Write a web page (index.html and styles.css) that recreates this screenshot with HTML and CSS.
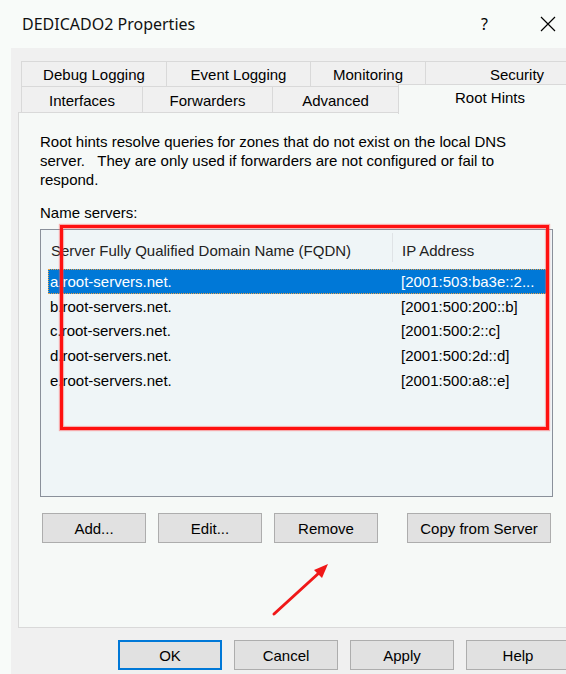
FILE: index.html
```html
<!DOCTYPE html>
<html lang="en">
<head>
<meta charset="utf-8">
<title>DEDICADO2 Properties</title>
<link rel="stylesheet" href="styles.css">
</head>
<body>
<div class="window">
  <div class="titlebar">
    <span class="title">DEDICADO2 Properties</span>
    <span class="help">?</span>
    <svg class="close" width="16" height="16" viewBox="0 0 16 16">
      <path d="M1 1 L15 15 M15 1 L1 15" stroke="#000" stroke-width="1.2" fill="none"/>
    </svg>
  </div>

  <div class="client">
    <div class="tabs">
      <div class="tab-row">
        <div class="tab w145">Debug Logging</div>
        <div class="tab w144">Event Logging</div>
        <div class="tab w115">Monitoring</div>
        <div class="tab w182">Security</div>
      </div>
      <div class="tab-row">
        <div class="tab w121">Interfaces</div>
        <div class="tab w130">Forwarders</div>
        <div class="tab w126">Advanced</div>
        <div class="tab w182 selected">Root Hints</div>
      </div>
    </div>

    <div class="panel">
      <p class="intro">Root hints resolve queries for zones that do not exist on the local DNS<br>server.&nbsp;&nbsp; They are only used if forwarders are not configured or fail to<br>respond.</p>
      <div class="label">Name servers:</div>

      <div class="listview">
        <div class="lv-header">
          <div class="col1">Server Fully Qualified Domain Name (FQDN)</div>
          <div class="col2">IP Address</div>
        </div>
        <div class="lv-row active">
          <div class="col1">a.root-servers.net.</div>
          <div class="col2">[2001:503:ba3e::2...</div>
        </div>
        <div class="lv-row">
          <div class="col1">b.root-servers.net.</div>
          <div class="col2">[2001:500:200::b]</div>
        </div>
        <div class="lv-row">
          <div class="col1">c.root-servers.net.</div>
          <div class="col2">[2001:500:2::c]</div>
        </div>
        <div class="lv-row">
          <div class="col1">d.root-servers.net.</div>
          <div class="col2">[2001:500:2d::d]</div>
        </div>
        <div class="lv-row">
          <div class="col1">e.root-servers.net.</div>
          <div class="col2">[2001:500:a8::e]</div>
        </div>
      </div>

      <div class="list-actions">
        <button class="btn">Add...</button>
        <button class="btn">Edit...</button>
        <button class="btn">Remove</button>
        <button class="btn wide">Copy from Server</button>
      </div>
    </div>

    <div class="dialog-actions">
      <button class="btn default">OK</button>
      <button class="btn">Cancel</button>
      <button class="btn">Apply</button>
      <button class="btn">Help</button>
    </div>
  </div>

  <!-- annotation drawn over the dialog -->
  <div class="highlight"></div>
  <svg class="pointer" width="566" height="674" viewBox="0 0 566 674">
    <line x1="274" y1="614" x2="320" y2="572" stroke="#f01818" stroke-width="3" stroke-linecap="round"/>
    <polygon points="328,564 314,570 322,578" fill="#f01818"/>
  </svg>
</div>
</body>
</html>
```

FILE: styles.css
```css
html, body {
  margin: 0;
  padding: 0;
  background: #f8fbf9;
}

.window {
  position: relative;
  width: 566px;
  height: 674px;
  overflow: hidden;
  background: #f8fbf9;
  font-family: "Liberation Sans", Arial, sans-serif;
  font-size: 15px;
  color: #000;
}

/* title bar */
.titlebar {
  height: 48px;
  display: flex;
  align-items: center;
  padding-left: 22px;
}

.title {
  font-family: "Noto Sans", "Open Sans", sans-serif;
  font-size: 16px;
  color: #111;
  flex: 1;
}

.help {
  font-family: "Noto Sans", sans-serif;
  font-size: 16px;
  margin-right: 52px;
}

.close {
  margin-right: 10px;
}

/* dialog body */
.client {
  margin-left: 11px;
  width: 600px;
  height: 626px;
  background: #f0f0f0;
  padding: 13px 0 0 7px;
  box-sizing: border-box;
}

.tabs {
  padding-left: 3px;
  position: relative;
  z-index: 2;
}

.tab-row {
  display: flex;
}

.tab-row:first-child .tab {
  height: 25px;
  padding-top: 0;
}

.tab {
  box-sizing: border-box;
  height: 26px;
  border: 1px solid #d9d9d9;
  border-bottom: none;
  margin-right: -1px;
  background: #f0f0f0;
  display: flex;
  align-items: center;
  justify-content: center;
  padding-top: 1px;
  white-space: nowrap;
}

.w145 { width: 146px; }
.w144 { width: 145px; }
.w115 { width: 116px; }
.w182 { width: 184px; }
.w121 { width: 122px; }
.w130 { width: 131px; }
.w126 { width: 127px; }

.tab.selected {
  background: #f6f9f7;
  height: 30px;
  margin-top: -2px;
  margin-bottom: -2px;
  padding-top: 0;
  padding-bottom: 4px;
}

.panel {
  box-sizing: border-box;
  width: 600px;
  height: 516px;
  border: 1px solid #d9d9d9;
  background: #f6f9f7;
  padding: 19px 0 0 21px;
  position: relative;
  z-index: 1;
}

.intro {
  margin: 0;
  line-height: 19px;
}

.label {
  margin-top: 14px;
  line-height: 19px;
}

/* list view */
.listview {
  box-sizing: border-box;
  width: 513px;
  height: 268px;
  margin-top: 7px;
  border: 1px solid #8a909a;
  background: #eff5f7;
}

.lv-header {
  display: flex;
  height: 39px;
  padding-top: 11px;
  box-sizing: border-box;
  line-height: 19px;
  color: #222;
}

.lv-header .col1 {
  width: 352px;
  padding-left: 10px;
  border-right: 1px solid #dfe3e6;
  margin-top: -8px;
  padding-top: 8px;
  height: 29px;
  box-sizing: border-box;
  white-space: nowrap;
}

.lv-header .col2 {
  padding-left: 9px;
}

.lv-row {
  display: flex;
  box-sizing: border-box;
  width: 500px;
  height: 24.7px;
  margin-left: 7px;
  line-height: 25px;
  white-space: nowrap;
}

.lv-row .col1 {
  width: 343px;
  padding-left: 2px;
  box-sizing: border-box;
}

.lv-row .col2 {
  padding-left: 10px;
}

.lv-row.active {
  background: #0078d7;
  color: #fff;
  outline: 1px dotted #e8a048;
  outline-offset: -1px;
}

/* buttons */
.btn {
  box-sizing: border-box;
  width: 104px;
  height: 30px;
  border: 1px solid #adadad;
  background: #e1e1e1;
  font-family: "Liberation Sans", Arial, sans-serif;
  font-size: 15px;
  color: #000;
  padding: 0;
}

.btn.wide {
  width: 144px;
}

.btn.default {
  border: 2px solid #0078d7;
}

.list-actions {
  display: flex;
  margin-top: 16px;
  margin-left: 2px;
}

.list-actions .btn + .btn {
  margin-left: 12px;
}

.list-actions .btn.wide {
  margin-left: 29px;
}

.dialog-actions {
  display: flex;
  margin-top: 12px;
  margin-left: 100px;
}

.dialog-actions .btn + .btn {
  margin-left: 12px;
}

/* red annotation */
.highlight {
  position: absolute;
  left: 60px;
  top: 225px;
  width: 483px;
  height: 199px;
  border: 3px solid #ff1010;
  box-shadow: 0 0 1px 1px rgba(255, 80, 80, 0.45), inset 0 0 1px 1px rgba(255, 80, 80, 0.45);
  z-index: 5;
}

.pointer {
  position: absolute;
  left: 0;
  top: 0;
  z-index: 5;
}
```
